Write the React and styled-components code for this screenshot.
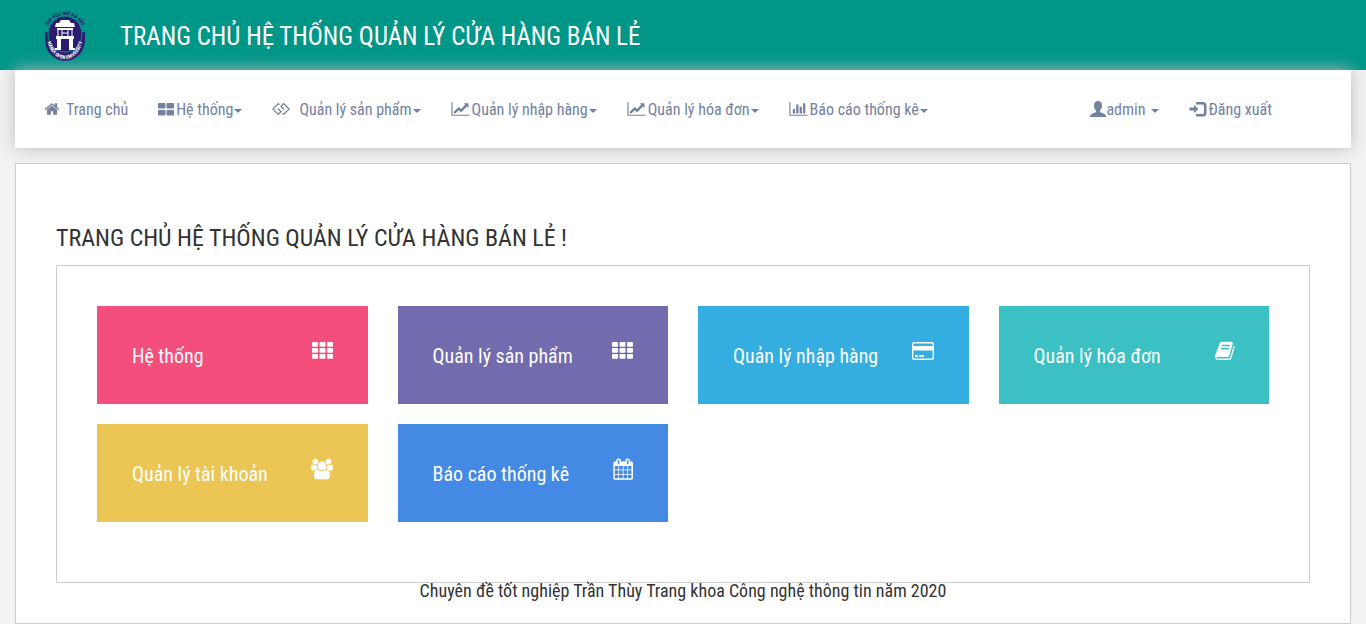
import React from "react";
import styled, { createGlobalStyle } from "styled-components";
import { FaGg } from "react-icons/fa";

const GlobalStyle = createGlobalStyle`
  * { box-sizing: border-box; }
  body {
    margin: 0;
    background: #f2f2f2;
    color: #333;
    font-family: "Roboto Condensed", Roboto, "Liberation Sans", sans-serif;
    font-size: 16px;
    line-height: 20px;
  }
`;

const Header = styled.header`
  display: flex;
  align-items: center;
  gap: 34px;
  height: 70px;
  padding: 0 44px;
  background: #009688;
  color: #fff;
`;

const Logo = styled.svg`
  width: 42px;
  height: 52px;
  flex: none;
`;

const SiteTitle = styled.h1`
  margin: 4px 0 0;
  font-size: 25px;
  line-height: 28px;
  font-weight: 400;
`;

const Nav = styled.nav`
  position: relative;
  display: flex;
  justify-content: space-between;
  height: 78px;
  margin: 0 15px;
  padding: 0 79px 0 29px;
  background: #fff;
  box-shadow: 0 0 15px #bbb;
`;

const NavGroup = styled.ul`
  display: flex;
  align-items: center;
  gap: 30px;
  margin: 0;
  padding: 0;
  list-style: none;
`;

const NavLink = styled.a`
  display: flex;
  align-items: center;
  gap: ${(p) => p.$gap}px;
  color: #73829f;
  font-size: 16px;
  text-decoration: none;
  white-space: nowrap;

  svg { flex: none; }
`;

const Label = styled.span`
  display: flex;
  align-items: center;
  gap: ${(p) => (p.$wide ? 5 : 1)}px;
  padding-top: 2px;
`;

const Caret = styled.span`
  margin-top: 2px;
  border-top: 4px solid;
  border-left: 4px solid transparent;
  border-right: 4px solid transparent;
`;

const Panel = styled.main`
  margin: 15px 15px 0;
  padding: 60px 40px 24px;
  background: #fff;
  border: 1px solid #ccc;
`;

const PageTitle = styled.h2`
  margin: 0 0 13px;
  font-size: 24px;
  line-height: 28px;
  font-weight: 400;
`;

const Board = styled.section`
  display: grid;
  grid-template-columns: repeat(4, 1fr);
  gap: 20px 30px;
  padding: 40px 40px 60px;
  border: 1px solid #ccc;
`;

const Card = styled.a`
  display: flex;
  justify-content: space-between;
  height: 98px;
  padding: 33px 35px;
  background: ${(p) => p.$color};
  color: #fff;
  font-size: 20px;
  line-height: 34px;
  font-weight: 400;
  text-decoration: none;

  svg {
    flex: none;
    overflow: visible;
  }
`;

const Footer = styled.footer`
  font-size: 18px;
  line-height: 16px;
  text-align: center;
`;

const shapes = {
  home: {
    box: "0 0 1792 1792",
    d: "M1472 992v480q0 26-19 45t-45 19h-384v-384h-256v384h-384q-26 0-45-19t-19-45v-480q0-1 .5-3t.5-3l575-474 575 474q1 2 1 6zm223-69l-62 74q-8 9-21 11h-3q-13 0-21-7l-692-577-692 577q-12 8-24 7-13-2-21-11l-62-74q-8-10-7-23.5t11-21.5l719-599q32-26 76-26t76 26l244 204v-195q0-14 9-23t23-9h192q14 0 23 9t9 23v408l219 182q10 8 11 21.5t-7 23.5z",
  },
  line: {
    box: "0 0 2048 1792",
    d: "M2048 1536v128h-2048v-1536h128v1408h1920zm-128-1248v435q0 21-19.5 29.5t-35.5-7.5l-121-121-633 633q-10 10-23 10t-23-10l-233-233-416 416-192-192 585-585q10-10 23-10t23 10l233 233 464-464-121-121q-16-16-7.5-35.5t29.5-19.5h435q14 0 23 9t9 23z",
  },
  bars: {
    box: "0 0 2048 1792",
    d: "M640 896v512h-256v-512h256zm384-512v1024h-256v-1024h256zm1024 1152v128h-2048v-1536h128v1408h1920zm-640-896v768h-256v-768h256zm384-384v1152h-256v-1152h256z",
  },
  tiles: {
    box: "0 0 16 14",
    d: "M1 1h5.500q1 0 1 1v3.500q0 1-1 1h-5.500q-1 0-1-1v-3.500q0-1 1-1zM9.500 1h5.500q1 0 1 1v3.500q0 1-1 1h-5.500q-1 0-1-1v-3.500q0-1 1-1zM1 8h5.500q1 0 1 1v3.500q0 1-1 1h-5.500q-1 0-1-1v-3.500q0-1 1-1zM9.500 8h5.500q1 0 1 1v3.500q0 1-1 1h-5.500q-1 0-1-1v-3.500q0-1 1-1z",
  },
  user: {
    box: "0 0 16 16",
    d: "M8 0C5.4 0 3.9 1.8 4 4.4C4.1 6.6 4.8 8.4 6 9.4C6.4 10.4 6 11 5 11.4L1.6 12.9Q0 13.6 0 15V16H16V15Q16 13.6 14.4 12.9L11 11.4C10 11 9.6 10.4 10 9.4C11.2 8.4 11.9 6.6 12 4.4C12.1 1.8 10.6 0 8 0Z",
  },
  login: {
    box: "0 0 18 16",
    d: "M7 1H14Q17.5 1 17.5 4.5V12Q17.5 15.5 14 15.5H7V13H13.5Q15 13 15 11.5V5Q15 3.5 13.5 3.5H7ZM5 4L9.5 8L5 12V9.5H0.5V6.5H5Z",
  },
  users: {
    box: "0 -80 1920 1792",
    d: "M593 896q-162 5-265 128h-134q-82 0-138-40.5t-56-118.5q0-353 124-353 6 0 43.5 21t97.5 42.5 119 21.5q67 0 133-23-5 37-5 66 0 139 81 256zm1071 637q0 120-73 189.5t-194 69.5h-874q-121 0-194-69.5t-73-189.5q0-53 3.5-103.5t14-109 26.5-108.5 43-97.5 62-81 85.5-53.5 111.5-20q10 0 43 21.5t73 48 107 48 135 21.5 135-21.5 107-48 73-48 43-21.5q61 0 111.5 20t85.5 53.5 62 81 43 97.5 26.5 108.5 14 109 3.5 103.5zm-1024-1277q0 106-75 181t-181 75-181-75-75-181 75-181 181-75 181 75 75 181zm704 384q0 159-112.5 271.5t-271.5 112.5-271.5-112.5-112.5-271.5 112.5-271.5 271.5-112.5 271.5 112.5 112.5 271.5zm576 225q0 78-56 118.5t-138 40.5h-134q-103-123-265-128 81-117 81-256 0-29-5-66 66 23 133 23 59 0 119-21.5t97.5-42.5 43.5-21q124 0 124 353zm-128-609q0 106-75 181t-181 75-181-75-75-181 75-181 181-75 181 75 75 181z",
  },
  calendar: {
    box: "-130 -130 1860 1860",
    d: "M192 1664h288v-288h-288v288zm352 0h320v-288h-320v288zm-352-352h288v-320h-288v320zm352 0h320v-320h-320v320zm-352-384h288v-288h-288v288zm736 736h320v-288h-320v288zm-384-736h320v-288h-320v288zm768 736h288v-288h-288v288zm-384-352h320v-320h-320v320zm-352-864v-288q0-13-9.5-22.5t-22.5-9.5h-64q-13 0-22.5 9.5t-9.5 22.5v288q0 13 9.5 22.5t22.5 9.5h64q13 0 22.5-9.5t9.5-22.5zm736 864h288v-320h-288v320zm-384-384h320v-288h-320v288zm384 0h288v-288h-288v288zm32-480v-288q0-13-9.5-22.5t-22.5-9.5h-64q-13 0-22.5 9.5t-9.5 22.5v288q0 13 9.5 22.5t22.5 9.5h64q13 0 22.5-9.5t9.5-22.5zm384-64v1280q0 52-38 90t-90 38h-1408q-52 0-90-38t-38-90v-1280q0-52 38-90t90-38h128v-96q0-66 47-113t113-47h64q66 0 113 47t47 113v96h384v-96q0-66 47-113t113-47h64q66 0 113 47t47 113v96h128q52 0 90 38t38 90z",
  },
  book: {
    box: "-190 -110 1860 1860",
    d: "M1703 478q40 57 18 129l-275 906q-19 64-76.5 107.5t-122.5 43.5h-923q-77 0-148.5-53.5t-99.5-131.5q-24-67-2-127 0-4 3-27t4-37q1-8-3-21.5t-3-19.5q2-11 8-21t16.5-23.5 16.5-23.5q23-38 45-91.5t30-91.5q3-10 .5-30t-.5-28q3-11 17-28t17-23q21-36 42-92t25-90q1-9-2.5-32t.5-28q4-13 22-30.5t22-22.5q19-26 42.5-84.5t27.5-96.5q1-8-3-25.5t-2-26.5q2-8 9-18t18-23 17-21q8-12 16.5-30.5t15-35 16-36 19.5-32 26.5-23.5 36-11.5 47.5 5.5l-1 3q38-9 51-9h761q74 0 114 56t18 130l-274 906q-36 119-71.5 153.5t-128.5 34.5h-869q-27 0-38 15-11 16-1 43 24 70 144 70h923q29 0 56-15.5t35-41.5l300-987q7-22 5-57 38 15 59 43zm-1064 2q-4 13 2 22.5t20 9.5h608q13 0 25.5-9.5t16.5-22.5l21-64q4-13-2-22.5t-20-9.5h-608q-13 0-25.5 9.5t-16.5 22.5zm-83 256q-4 13 2 22.5t20 9.5h608q13 0 25.5-9.5t16.5-22.5l21-64q4-13-2-22.5t-20-9.5h-608q-13 0-25.5 9.5t-16.5 22.5z",
  },
  card: {
    box: "0 -1 22 22",
    d: "M2 2H20Q22 2 22 4V18Q22 20 20 20H2Q0 20 0 18V4Q0 2 2 2ZM2 3.4Q1.4 3.4 1.4 4V6H20.600V4Q20.600 3.4 20 3.4ZM1.4 10.500V18Q1.4 18.600 2 18.600H20Q20.600 18.600 20.600 18V10.500ZM3 15H6V17H3ZM7 15H12V17H7Z",
  },
  grid: {
    box: "0 0 22 22",
    d: [3, 9, 15]
      .map((y) => [1, 8.5, 16].map((x) => `M${x + 1} ${y}h4q1 0 1 1v2.7q0 1-1 1h-4q-1 0-1-1v-2.7q0-1 1-1z`).join(""))
      .join(""),
  },
};

function Icon({ name, width, height }) {
  return (
    <svg width={width} height={height} viewBox={shapes[name].box} fill="currentColor" fillRule={name === "users" ? "nonzero" : "evenodd"} aria-hidden="true">
      <path d={shapes[name].d} />
    </svg>
  );
}

function UniversityLogo() {
  return (
    <Logo viewBox="0 0 42 52" role="img" aria-label="Hanoi Open University">
      <defs>
        <path id="arc-top" d="M3 19A19 19 0 0 1 39 19" />
        <path id="arc-bottom" d="M3 27A18 23 0 0 0 39 27" />
      </defs>
      <path d="M1 23H41V31A20 21 0 0 1 1 31Z" fill="#2b1c70" />
      <ellipse cx="21" cy="25" rx="17" ry="18" fill="#2b1c70" stroke="#009688" strokeWidth="1" />
      <path d="M17 11H25L27 14H30L31 18H11L12 14H15ZM13 19H29V21H13ZM12 27H30V30H12ZM13 30H17V41H11V39H13ZM25 30H29V39H31V41H25Z" fill="#fff" />
      <path d="M14 21V27M28 21V27M18 21V27M24 21V27M18 24H24" fill="none" stroke="#fff" strokeWidth="1" />
      <text fill="#2b1c70" fontSize="5" fontWeight="700" textAnchor="middle">
        <textPath href="#arc-top" startOffset="50%">ĐẠI HỌC MỞ HÀ NỘI</textPath>
      </text>
      <text fill="#fff" fontSize="5" fontWeight="700" textAnchor="middle">
        <textPath href="#arc-bottom" startOffset="50%">HANOI OPEN UNIVERSITY</textPath>
      </text>
    </Logo>
  );
}

const mainLinks = [
  { text: "Trang chủ", icon: <Icon name="home" width={16} height={16} />, gap: 6 },
  { text: "Hệ thống", icon: <Icon name="tiles" width={16} height={14} />, gap: 2, menu: true },
  { text: "Quản lý sản phẩm", icon: <FaGg size={18} />, gap: 9, menu: true },
  { text: "Quản lý nhập hàng", icon: <Icon name="line" width={19} height={16} />, gap: 2, menu: true },
  { text: "Quản lý hóa đơn", icon: <Icon name="line" width={19} height={16} />, gap: 2, menu: true },
  { text: "Báo cáo thống kê", icon: <Icon name="bars" width={19} height={16} />, gap: 2, menu: true },
];

const accountLinks = [
  { text: "admin", icon: <Icon name="user" width={16} height={16} />, gap: 0, menu: true, wide: true },
  { text: "Đăng xuất", icon: <Icon name="login" width={18} height={16} />, gap: 2 },
];

const cards = [
  { text: "Hệ thống", color: "#f44f7c", icon: "grid" },
  { text: "Quản lý sản phẩm", color: "#726bae", icon: "grid" },
  { text: "Quản lý nhập hàng", color: "#34aee1", icon: "card" },
  { text: "Quản lý hóa đơn", color: "#3bc0c3", icon: "book" },
  { text: "Quản lý tài khoản", color: "#ebc655", icon: "users" },
  { text: "Báo cáo thống kê", color: "#4489e4", icon: "calendar" },
];

function NavList({ links }) {
  return (
    <NavGroup>
      {links.map((l) => (
        <li key={l.text}>
          <NavLink href="#" $gap={l.gap}>
            {l.icon}
            <Label $wide={l.wide}>
              {l.text}
              {l.menu && <Caret />}
            </Label>
          </NavLink>
        </li>
      ))}
    </NavGroup>
  );
}

export default function App() {
  return (
    <>
      <GlobalStyle />
      <Header>
        <UniversityLogo />
        <SiteTitle>TRANG CHỦ HỆ THỐNG QUẢN LÝ CỬA HÀNG BÁN LẺ</SiteTitle>
      </Header>
      <Nav>
        <NavList links={mainLinks} />
        <NavList links={accountLinks} />
      </Nav>
      <Panel>
        <PageTitle>TRANG CHỦ HỆ THỐNG QUẢN LÝ CỬA HÀNG BÁN LẺ !</PageTitle>
        <Board>
          {cards.map((c) => (
            <Card key={c.text} href="#" $color={c.color}>
              {c.text}
              <Icon name={c.icon} width={22} height={22} />
            </Card>
          ))}
        </Board>
        <Footer>Chuyên đề tốt nghiệp Trần Thùy Trang khoa Công nghệ thông tin năm 2020</Footer>
      </Panel>
    </>
  );
}
